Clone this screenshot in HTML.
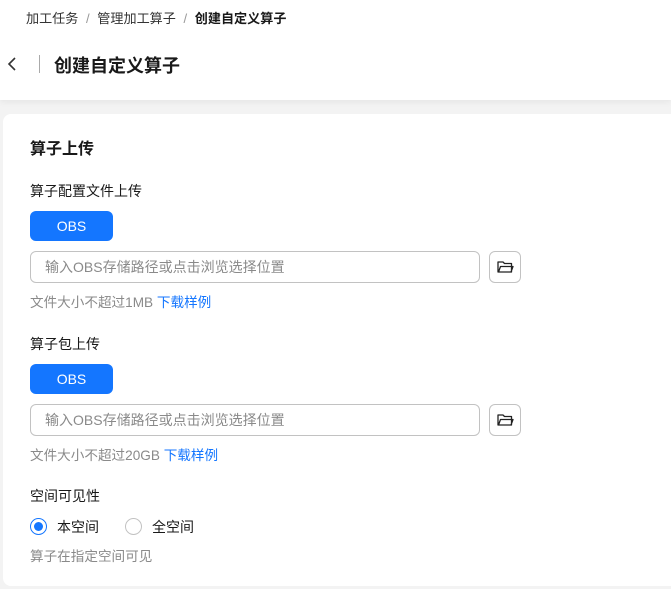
<!DOCTYPE html>
<html><head><meta charset="utf-8"><style>
*{margin:0;padding:0;box-sizing:border-box}
body{width:671px;height:589px;overflow:hidden;background:#f3f3f3;font-family:"Liberation Sans","Noto Sans CJK SC",sans-serif;color:#191919;position:relative}
.hd{position:absolute;left:0;top:0;width:671px;height:100px;background:#fff;box-shadow:0 2px 6px rgba(0,0,0,.06)}
.a{position:absolute;white-space:nowrap}
.card{position:absolute;left:3px;top:114px;width:700px;height:472px;background:#fff;border-radius:8px}
.btn{position:absolute;left:30px;width:83px;height:30px;background:#1476ff;border-radius:6px;color:#fff;font-size:14px;text-align:center;line-height:30px}
.inp{position:absolute;left:30px;width:450px;height:32px;border:1px solid #c2c2c2;border-radius:6px;font-size:14px;color:#8a8a8a;padding-left:14px;line-height:30px}
.fb{position:absolute;left:489px;width:32px;height:32px;border:1px solid #c2c2c2;border-radius:6px}
.help{font-size:13.6px;color:#8a8a8a}
.lbl{font-size:14px}
.rad{position:absolute;width:17px;height:17px;border-radius:50%;border:1px solid #c2c2c2;background:#fff}
</style></head><body>
<div class="hd"></div>
<div class="a" style="left:26px;top:8px;font-size:13.1px;color:#333">加工任务 <span style="color:#999;margin:0 4px">/</span> 管理加工算子 <span style="color:#999;margin:0 4px">/</span> <b style="color:#191919">创建自定义算子</b></div>
<svg class="a" style="left:6px;top:56px" width="12" height="16" viewBox="0 0 12 16"><path d="M9 2 L3 8 L9 14" stroke="#333" stroke-width="1.6" fill="none"/></svg>
<div class="a" style="left:39px;top:55px;width:1px;height:18px;background:#aaa"></div>
<div class="a" style="left:54px;top:52px;font-size:18px;font-weight:bold">创建自定义算子</div>
<div class="card"></div>
<div class="a" style="left:30px;top:135px;font-size:16px;font-weight:bold">算子上传</div>
<div class="a lbl" style="left:30px;top:181px">算子配置文件上传</div>
<div class="btn" style="top:211px">OBS</div>
<div class="inp" style="top:251px">输入OBS存储路径或点击浏览选择位置</div>
<div class="fb" style="top:251px"><svg width="30" height="30" viewBox="0 0 30 30"><path d="M8 10 h5 l1.5 1.5 h7 v8.5 h-13.5 z M8.5 20 l2-5.5 h12.5 l-2 5.5" stroke="#222" stroke-width="1.3" fill="none" stroke-linejoin="round"/></svg></div>
<div class="a help" style="left:30px;top:291px">文件大小不超过1MB <span style="color:#1476ff">下载样例</span></div>
<div class="a lbl" style="left:30px;top:334px">算子包上传</div>
<div class="btn" style="top:364px">OBS</div>
<div class="inp" style="top:404px">输入OBS存储路径或点击浏览选择位置</div>
<div class="fb" style="top:404px"><svg width="30" height="30" viewBox="0 0 30 30"><path d="M8 10 h5 l1.5 1.5 h7 v8.5 h-13.5 z M8.5 20 l2-5.5 h12.5 l-2 5.5" stroke="#222" stroke-width="1.3" fill="none" stroke-linejoin="round"/></svg></div>
<div class="a help" style="left:30px;top:444px">文件大小不超过20GB <span style="color:#1476ff">下载样例</span></div>
<div class="a lbl" style="left:30px;top:486px">空间可见性</div>
<div class="rad" style="left:30px;top:518px;border-color:#1476ff"><div style="position:absolute;left:3px;top:3px;width:9px;height:9px;border-radius:50%;background:#1476ff"></div></div>
<div class="a lbl" style="left:57px;top:517px">本空间</div>
<div class="rad" style="left:125px;top:518px"></div>
<div class="a lbl" style="left:152px;top:517px">全空间</div>
<div class="a help" style="left:30px;top:545px">算子在指定空间可见</div>
</body></html>
